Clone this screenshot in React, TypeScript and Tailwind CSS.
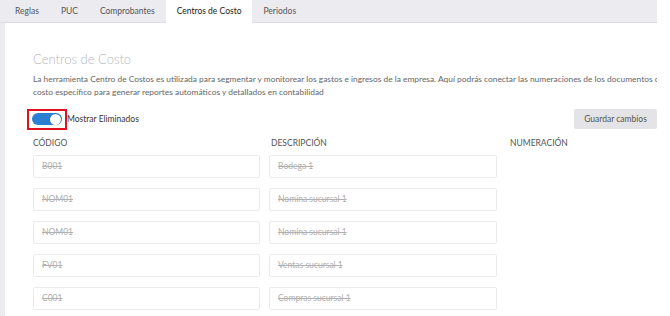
import React from "react";

const rows = [
  { code: "B001", desc: "Bodega 1" },
  { code: "NOM01", desc: "Nomina sucursal 1" },
  { code: "NOM01", desc: "Nomina sucursal 1" },
  { code: "FV01", desc: "Ventas sucursal 1" },
  { code: "C001", desc: "Compras sucursal 1" },
];

const tabs = ["Reglas", "PUC", "Comprobantes", "Centros de Costo", "Periodos"];

export default function App() {
  return (
    <div
      className="w-[670px] h-[316px] overflow-hidden bg-white"
      style={{ fontFamily: "Lato, 'Open Sans', sans-serif" }}
    >
      <div className="w-[657px] h-[316px] bg-[#ebebf0] flex flex-col">
        <div className="h-[23px] flex items-end border-b border-[#dcdce2] pl-[4px] shrink-0">
          {tabs.map((t) => (
            <div
              key={t}
              className={
                t === "Centros de Costo"
                  ? "h-[23px] -mb-px px-[11px] bg-white flex items-center text-[8.5px] text-[#222]"
                  : "h-[22px] px-[11px] flex items-center text-[8.5px] text-[#555]"
              }
            >
              {t}
            </div>
          ))}
        </div>
        <div className="flex-1 ml-[5px] bg-white overflow-hidden pl-[28px] pt-[28px]">
          <div className="text-[13px] font-light text-[#b8b8c0] leading-[16px]">Centros de Costo</div>
          <div className="mt-[6px] text-[8.4px] leading-[13px] text-[#666] whitespace-nowrap">
            La herramienta Centro de Costos es utilizada para segmentar y monitorear los gastos e ingresos de la empresa. Aquí podrás conectar las numeraciones de los documentos con un centro de
            <br />
            costo específico para generar reportes automáticos y detallados en contabilidad
          </div>
          <div className="mt-[10px] flex items-center justify-between h-[20px]">
            <div className="flex items-center">
              <div className="-ml-[6px] w-[40px] h-[21px] border-2 border-[#e0101c] flex items-center justify-center">
                <div className="w-[30px] h-[12px] rounded-full bg-[#2b7fd0] relative">
                  <div className="absolute right-[1px] top-[0.5px] w-[11px] h-[11px] rounded-full bg-white shadow-[0_0_1px_rgba(0,0,0,0.4)]" />
                </div>
              </div>
              <span className="text-[8.5px] text-[#333]">Mostrar Eliminados</span>
            </div>
            <button className="w-[83px] h-[20px] bg-[#e4e4e6] rounded-[2px] text-[8.5px] text-[#555]">
              Guardar cambios
            </button>
          </div>
          <div className="mt-[8px] flex text-[8.5px] text-[#555] h-[12px] items-center">
            <div className="w-[238px]">CÓDIGO</div>
            <div className="w-[239px]">DESCRIPCIÓN</div>
            <div>NUMERACIÓN</div>
          </div>
          <div className="mt-[6px] flex flex-col gap-[10px]">
            {rows.map((r, i) => (
              <div key={i} className="flex gap-[9px]">
                <div className="w-[227px] h-[23px] border border-[#ebebeb] rounded-[2px] flex items-center pl-[8px] text-[8.5px] text-[#b0b0b0] line-through">
                  {r.code}
                </div>
                <div className="w-[228px] h-[23px] border border-[#ebebeb] rounded-[2px] flex items-center pl-[8px] text-[8.5px] text-[#b0b0b0] line-through">
                  {r.desc}
                </div>
              </div>
            ))}
          </div>
        </div>
      </div>
    </div>
  );
}
